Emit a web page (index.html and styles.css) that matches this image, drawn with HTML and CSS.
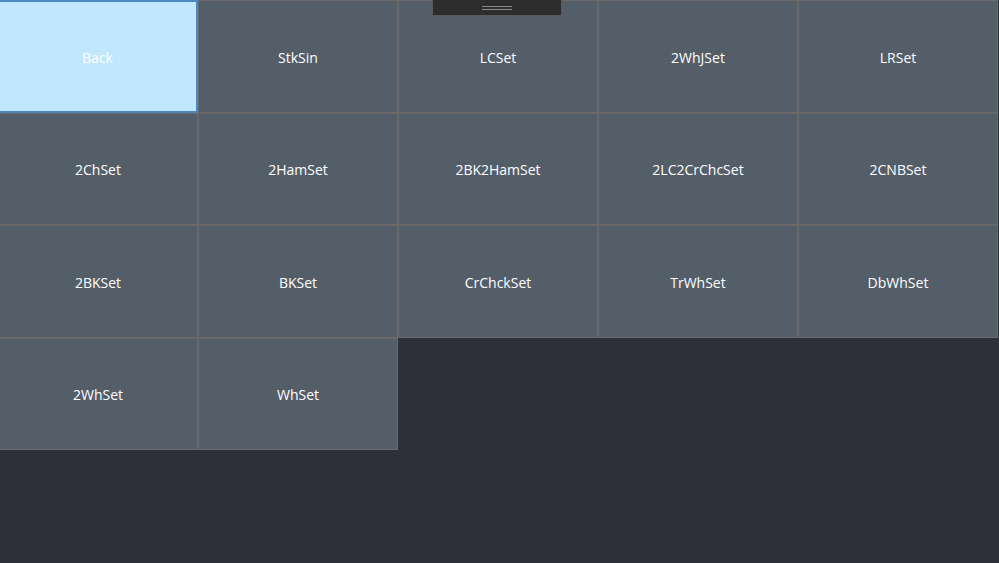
FILE: index.html
```html
<!DOCTYPE html>
<html>
<head>
<meta charset="utf-8">
<link rel="stylesheet" href="styles.css">
</head>
<body>
<div class="screen">
  <div class="grid">
    <div class="tile back">Back</div>
    <div class="tile">StkSin</div>
    <div class="tile">LCSet</div>
    <div class="tile">2WhJSet</div>
    <div class="tile">LRSet</div>
    <div class="tile">2ChSet</div>
    <div class="tile">2HamSet</div>
    <div class="tile">2BK2HamSet</div>
    <div class="tile">2LC2CrChcSet</div>
    <div class="tile">2CNBSet</div>
    <div class="tile">2BKSet</div>
    <div class="tile">BKSet</div>
    <div class="tile">CrChckSet</div>
    <div class="tile">TrWhSet</div>
    <div class="tile">DbWhSet</div>
    <div class="tile">2WhSet</div>
    <div class="tile">WhSet</div>
  </div>
  <div class="handle"><span class="grip"></span></div>
</div>
</body>
</html>
```
FILE: styles.css
```css
html, body {
  margin: 0;
  padding: 0;
  background: #2e313a;
}
.screen {
  position: relative;
  width: 999px;
  height: 563px;
  overflow: hidden;
  background: #2e313a;
}
.grid {
  display: grid;
  grid-template-columns: repeat(5, 200px);
  grid-auto-rows: 112.5px;
  width: 1000px;
  margin-left: -2px;
}
.tile {
  box-sizing: border-box;
  border: 1px solid #696969;
  background: #545e69;
  color: #ffffff;
  font-family: "Open Sans", "Noto Sans", sans-serif;
  font-size: 14px;
  display: flex;
  align-items: center;
  justify-content: center;
  padding-top: 2px;
}
.tile.back {
  background: #c0e7fc;
  border: 1px solid #4a88c0;
  border-width: 2px 2px 2px 1px;
}
.handle {
  position: absolute;
  top: -1px;
  left: 432px;
  width: 130px;
  height: 17px;
  box-sizing: border-box;
  background: #2d2d2e;
  border: 1px solid #5a5a5a;
  display: flex;
  justify-content: center;
  align-items: center;
}
.grip {
  width: 30px;
  height: 4px;
  border-top: 1px solid #8a8a8a;
  border-bottom: 1px solid #8a8a8a;
  box-sizing: border-box;
}
```
